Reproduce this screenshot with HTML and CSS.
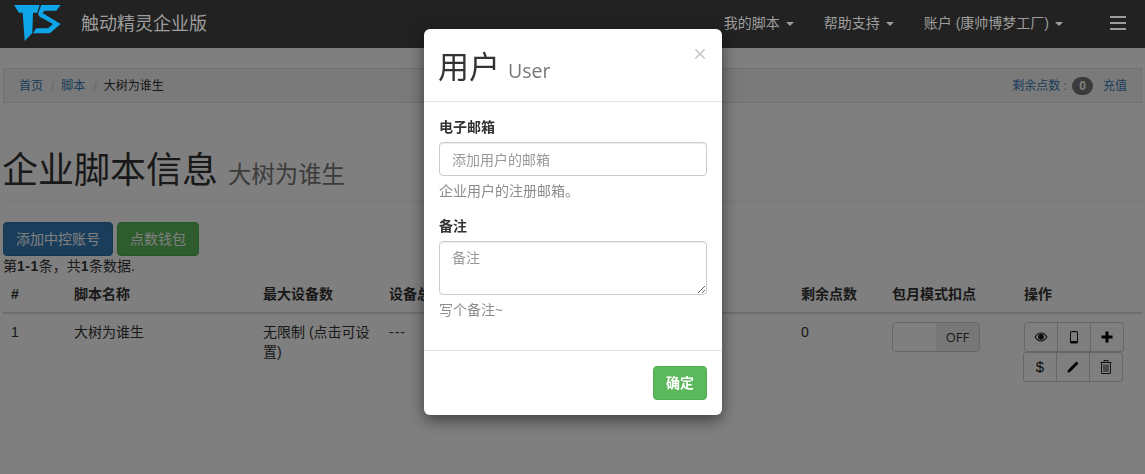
FILE: index.html
```html
<!DOCTYPE html>
<html lang="zh-CN">
<head>
<meta charset="utf-8">
<title>企业脚本信息</title>
<link rel="stylesheet" href="styles.css">
</head>
<body>
<nav class="navbar">
  <a class="brand">
    <svg class="logo" width="48" height="36" viewBox="13 5 48 36"><path fill="#0ea5e9" d="M14 5H39.700L37.300 12.700H33L32.300 33L24.700 41L22.700 12.700H19ZM41.300 5H60.700L56.300 10.700H44.700L42.500 13L60.700 24L49.700 33.300H33L36.300 28.300H48L53 24L39.700 16.700L38 14Z"/></svg>
    <span class="brand-text">触动精灵企业版</span>
  </a>
  <ul class="nav">
    <li>我的脚本<i class="caret"></i></li>
    <li>帮助支持<i class="caret"></i></li>
    <li>账户 (康帅博梦工厂)<i class="caret"></i></li>
  </ul>
  <span class="burger"><i></i><i></i><i></i></span>
</nav>

<main class="page">
  <div class="breadcrumb">
    <ol class="crumbs">
      <li><a>首页</a></li>
      <li><a>脚本</a></li>
      <li>大树为谁生</li>
    </ol>
    <div class="points"><a class="points-label">剩余点数 :</a><span class="badge">0</span><a>充值</a></div>
  </div>
  <h1 class="page-header">企业脚本信息 <small>大树为谁生</small></h1>
  <div class="actions">
    <a class="btn btn-primary">添加中控账号</a>
    <a class="btn btn-success">点数钱包</a>
  </div>
  <div class="summary">第<b>1-1</b>条，共<b>1</b>条数据.</div>
  <table class="table">
    <colgroup>
      <col class="c1"><col class="c2"><col class="c3"><col class="c4"><col class="c5"><col class="c6"><col class="c7">
    </colgroup>
    <thead>
      <tr><th>#</th><th>脚本名称</th><th>最大设备数</th><th>设备总数</th><th>剩余点数</th><th>包月模式扣点</th><th>操作</th></tr>
    </thead>
    <tbody>
      <tr>
        <td>1</td>
        <td>大树为谁生</td>
        <td>无限制 (点击可设置)</td>
        <td class="dash">---</td>
        <td>0</td>
        <td>
          <span class="switch"><span class="switch-on"></span><span class="switch-off">OFF</span></span>
        </td>
        <td class="ops">
          <div class="btn-group first">
            <a class="op"><svg width="14" height="14" viewBox="0 0 14 14"><path fill="#111" d="M0.500 7C2.500 3.800 4.700 2.500 7 2.500S11.500 3.800 13.500 7C11.500 10.200 9.300 11.500 7 11.500S2.500 10.200 .5 7Z"/><path fill="#fff" d="M1.800 7C3.300 4.700 5 3.600 7 3.600S10.700 4.700 12.200 7C10.700 9.300 9 10.400 7 10.400S3.300 9.300 1.800 7Z"/><circle cx="7" cy="6.800" r="2.900" fill="#111"/></svg></a>
            <a class="op"><svg width="14" height="14" viewBox="0 0 14 14"><rect x="3" y="1" width="8" height="12.500" rx="1.500" fill="#111"/><rect x="4" y="2.200" width="6" height="8.800" fill="#fff"/></svg></a>
            <a class="op"><svg width="14" height="14" viewBox="0 0 14 14"><path fill="#000" d="M5.500 1.500H8.500V5.500H12.500V8.500H8.500V12.500H5.500V8.500H1.500V5.500H5.500Z"/></svg></a>
          </div>
          <div class="btn-group second">
            <a class="op op-text">$</a>
            <a class="op"><svg width="14" height="14" viewBox="0 0 14 14"><path fill="#000" d="M10.500 1.500L12.500 3.500L4 12L1.500 12.700L2 10Z"/></svg></a>
            <a class="op"><svg width="14" height="16" viewBox="0 0 14 16"><path fill="none" stroke="#222" stroke-width="1" d="M1.500 3.500H12.500M5 3.500V1.500H9V3.500M2.500 3.500V14.500H11.500V3.500M5 5.500V13M7 5.500V13M9 5.500V13"/></svg></a>
          </div>
        </td>
      </tr>
    </tbody>
  </table>
</main>

<div class="backdrop"></div>

<section class="modal">
  <header class="modal-header">
    <span class="close">×</span>
    <h4 class="modal-title">用户 <small>User</small></h4>
  </header>
  <div class="modal-body">
    <div class="form-group">
      <label class="label">电子邮箱</label>
      <input class="control" type="text" placeholder="添加用户的邮箱">
      <p class="help">企业用户的注册邮箱。</p>
    </div>
    <div class="form-group">
      <label class="label">备注</label>
      <textarea class="control area" placeholder="备注"></textarea>
      <p class="help">写个备注~</p>
    </div>
  </div>
  <footer class="modal-footer"><a class="btn btn-ok">确定</a></footer>
</section>
</body>
</html>
```
FILE: styles.css
```css
* { box-sizing: border-box; }
html, body { margin: 0; height: 100%; }
body {
  background: #fff;
  color: #333;
  font: 14px/20px "Liberation Sans", "Noto Sans CJK SC", sans-serif;
  overflow: hidden;
}
a { color: #337ab7; text-decoration: none; }

.navbar {
  position: relative;
  z-index: 3;
  display: flex;
  align-items: center;
  height: 48px;
  background: #222;
  color: #9d9d9d;
}
.brand { display: flex; align-items: center; padding-left: 13px; color: #9d9d9d; }
.logo { display: block; margin-top: -2px; }
.brand-text { margin-left: 20px; font-size: 18px; line-height: 20px; }
.nav { display: flex; margin: 0 0 2px auto; padding: 0; list-style: none; }
.nav li { padding: 0 15px; }
.caret {
  display: inline-block;
  margin-left: 6px;
  vertical-align: middle;
  border-top: 4px solid #9d9d9d;
  border-left: 4px solid transparent;
  border-right: 4px solid transparent;
}
.burger { display: flex; flex-direction: column; gap: 4px; margin: 0 19px 2px 32px; }
.burger i { display: block; width: 16px; height: 2px; background: #9d9d9d; }

.page { padding: 20px 3px 0; }
.breadcrumb {
  display: flex;
  justify-content: space-between;
  align-items: center;
  height: 35px;
  padding: 0 14px 0 15px;
  background: #f5f5f5;
  border: 1px solid #e3e3e3;
  font-size: 12px;
}
.crumbs { display: flex; margin: 0; padding: 0; list-style: none; }
.crumbs li + li::before { content: "/"; padding: 0 7px 0 8px; color: #ccc; }
.points { display: flex; align-items: center; }
.points-label { margin-right: 5px; }
.badge {
  min-width: 21px;
  height: 18px;
  margin-right: 10px;
  padding: 0 7px;
  border-radius: 10px;
  background: #777;
  color: #fff;
  font-size: 12px;
  font-weight: 700;
  line-height: 18px;
  text-align: center;
}
.page-header {
  height: 51px;
  margin: 48px 0 20px;
  padding: 0;
  border-bottom: 1px solid #eee;
  color: #333;
  font-size: 36px;
  font-weight: 400;
  line-height: 40px;
  text-indent: -1px;
}
.page-header small { color: #777; font-size: 65%; font-weight: 400; line-height: 1; }
.actions { display: flex; gap: 4px; }
.btn {
  display: inline-block;
  padding: 6px 12px;
  border: 1px solid transparent;
  border-radius: 4px;
  color: #fff;
  font-size: 14px;
  line-height: 20px;
}
.actions .btn { height: 34px; }
.btn-primary { background: #337ab7; border-color: #2e6da4; }
.btn-success { background: #5cb85c; border-color: #4cae4c; }
.summary { height: 20px; }
.summary b { letter-spacing: .5px; }
.table { width: 1139px; border-collapse: collapse; table-layout: fixed; }
.c1 { width: 63px; } .c2 { width: 189px; } .c3 { width: 126px; } .c4 { width: 412px; }
.c5 { width: 91px; } .c6 { width: 132px; } .c7 { width: 126px; }
.table th, .table td { padding: 8px; text-align: left; vertical-align: top; }
.table th { border-bottom: 2px solid #ddd; vertical-align: bottom; }
.table .dash { letter-spacing: 1px; }
.switch {
  display: flex;
  width: 88px;
  height: 30px;
  overflow: hidden;
  border: 1px solid #ccc;
  border-radius: 4px;
}
.switch-on { flex: 0 0 43px; background: #fff; }
.switch-off {
  flex: 1;
  background: #eee;
  color: #333;
  font: 13px/28px "Open Sans", sans-serif;
  text-align: center;
}
.table .ops { padding-right: 0; }
.btn-group { display: flex; width: 100px; height: 30px; }
.btn-group.second { margin-left: -1px; }
.op {
  display: flex;
  flex: 0 0 34px;
  align-items: center;
  justify-content: center;
  margin-left: -1px;
  background: #fff;
  border: 1px solid #ccc;
  color: #111;
}
.op:first-child { margin-left: 0; border-radius: 3px 0 0 3px; }
.op:last-child { border-radius: 0 3px 3px 0; }
.op-text { font-size: 15px; }

.backdrop { position: fixed; inset: 0; z-index: 2; background: rgba(0, 0, 0, .5); }

.modal {
  position: fixed;
  z-index: 4;
  top: 29px;
  left: 424px;
  width: 298px;
  height: 386px;
  background: #fff;
  border-radius: 6px;
  box-shadow: 0 5px 15px rgba(0, 0, 0, .5);
  font-family: "Open Sans", "Noto Sans CJK SC", sans-serif;
}
.modal-header { position: relative; height: 73px; padding: 15px; border-bottom: 1px solid #e5e5e5; }
.close {
  position: absolute;
  top: 12px;
  right: 15px;
  color: #000;
  font: 400 24px/26px "Liberation Sans", sans-serif;
  opacity: .2;
}
.modal-title { margin: 0 0 0 -1px; color: #333; font-size: 31px; font-weight: 400; line-height: 45px; }
.modal-title small { color: #777; font-size: 19.5px; }
.modal-body { height: 248px; padding: 15px; }
.form-group { margin-bottom: 15px; }
.label { display: block; height: 25px; font-weight: 700; line-height: 20px; }
.control {
  display: block;
  width: 100%;
  height: 34px;
  padding: 6px 12px;
  border: 1px solid #ccc;
  border-radius: 4px;
  box-shadow: inset 0 1px 1px rgba(0, 0, 0, .075);
  color: #555;
  font: 14px/20px "Open Sans", "Noto Sans CJK SC", sans-serif;
}
.control::placeholder { color: #999; }
.area { height: 54px; }
.help { margin: 5px 0 0; color: #8c8c8c; line-height: 20px; }
.modal-footer { display: flex; justify-content: flex-end; height: 65px; padding: 15px; border-top: 1px solid #e5e5e5; }
.btn-ok { height: 34px; background: #5cb85c; border-color: #4cae4c; font-weight: 700; }
```
